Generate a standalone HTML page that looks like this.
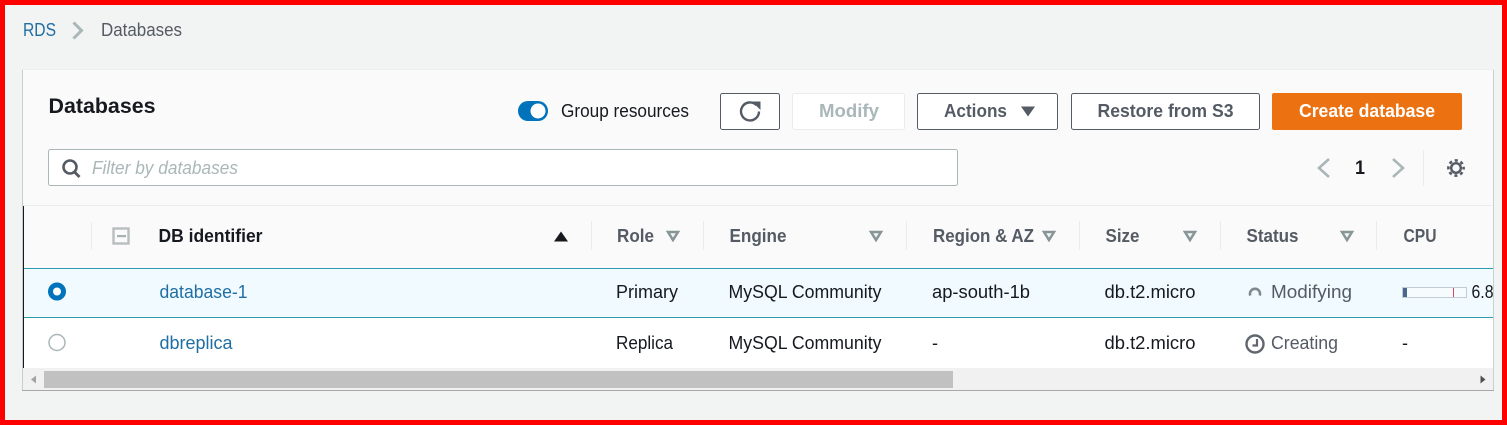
<!DOCTYPE html>
<html lang="en"><head><meta charset="utf-8"><title>Databases</title>
<style>
html,body{margin:0;padding:0;width:1507px;height:425px;overflow:hidden;background:#f2f3f3}
svg{display:block}
text{font-family:"Liberation Sans",sans-serif;font-size:18px;fill:#16191f}
.b{font-weight:700}
.g{fill:#545b64}
.l{fill:#1f6fa3}
</style></head><body>
<svg width="1507" height="425" viewBox="0 0 1507 425" xmlns="http://www.w3.org/2000/svg">
<rect width="1507" height="425" fill="#f2f3f3"/>

<!-- breadcrumb -->
<text x="23" y="36" class="l" textLength="33" lengthAdjust="spacingAndGlyphs">RDS</text>
<path d="M73.500 22.500l8 8-8 8" fill="none" stroke="#aab7b8" stroke-width="3"/>
<text x="101" y="36" class="g" textLength="81" lengthAdjust="spacingAndGlyphs">Databases</text>

<!-- panel -->
<rect x="22" y="69" width="1472" height="322" fill="#fafafa"/>
<rect x="22" y="69" width="1" height="322" fill="#c8cccc"/>
<rect x="1493" y="69" width="1" height="322" fill="#c5d3d8"/>
<rect x="22" y="69" width="1472" height="1" fill="#eeeeee"/>
<text x="48.500" y="113" class="b" style="font-size:21px" textLength="107" lengthAdjust="spacingAndGlyphs">Databases</text>

<!-- toggle -->
<rect x="518" y="101" width="30" height="20" rx="10" fill="#0073bb"/>
<circle cx="538" cy="111" r="7.500" fill="#fff"/>
<text x="561" y="117" textLength="128" lengthAdjust="spacingAndGlyphs">Group resources</text>

<!-- buttons -->
<rect x="720.500" y="93.500" width="59" height="36" rx="2" fill="#fff" stroke="#545b64"/>
<path d="M756.400 105.100A9 9 0 1 0 759 111.500" fill="none" stroke="#545b64" stroke-width="2.400"/>
<path d="M752 101.500h8.500v8.500z" fill="#545b64"/>

<rect x="792.500" y="93.500" width="112" height="36" rx="2" fill="#fff" stroke="#eaeded"/>
<text x="819" y="117" class="b" style="fill:#aab7b8" textLength="60" lengthAdjust="spacingAndGlyphs">Modify</text>

<rect x="917.500" y="93.500" width="140" height="36" rx="2" fill="#fff" stroke="#545b64"/>
<text x="944" y="117" class="b g" textLength="63" lengthAdjust="spacingAndGlyphs">Actions</text>
<path d="M1021 106.500h14l-7 10z" fill="#545b64"/>

<rect x="1071.500" y="93.500" width="188" height="36" rx="2" fill="#fff" stroke="#545b64"/>
<text x="1097.500" y="117" class="b g" textLength="136" lengthAdjust="spacingAndGlyphs">Restore from S3</text>

<rect x="1272" y="93" width="190" height="37" rx="2" fill="#ec7211"/>
<text x="1299" y="117" class="b" style="fill:#fff" textLength="136" lengthAdjust="spacingAndGlyphs">Create database</text>

<!-- filter -->
<rect x="48.500" y="149.500" width="909" height="36" rx="2" fill="#fff" stroke="#aab7b8"/>
<circle cx="70" cy="167" r="6.500" fill="none" stroke="#545b64" stroke-width="2.600"/>
<path d="M74.500 172l5 5" stroke="#545b64" stroke-width="2.800" fill="none"/>
<text x="92" y="174" style="fill:#aab7b8;font-style:italic" textLength="146" lengthAdjust="spacingAndGlyphs">Filter by databases</text>

<!-- pagination -->
<path d="M1329 159l-10 9 10 9" fill="none" stroke="#aab7b8" stroke-width="2.600"/>
<text x="1355" y="174" textLength="10" lengthAdjust="spacingAndGlyphs" style="font-size:19px;font-weight:700">1</text>
<path d="M1393 159l10 9-10 9" fill="none" stroke="#aab7b8" stroke-width="2.600"/>
<rect x="1423" y="150" width="1" height="36" fill="#eaeded"/>
<!-- gear -->
<circle cx="1456" cy="168" r="4.800" fill="none" stroke="#545b64" stroke-width="2.400"/>
<circle cx="1456" cy="168" r="7.600" fill="none" stroke="#545b64" stroke-width="2.600" stroke-dasharray="3.100 2.870" stroke-dashoffset="1.550"/>

<!-- table header -->
<rect x="23" y="205" width="1470" height="1" fill="#eaeded"/>
<rect x="23" y="206" width="1" height="162" fill="#16191f"/>
<g fill="#eaeded">
<rect x="91" y="222" width="1" height="28"/>
<rect x="591" y="221" width="1" height="29"/>
<rect x="703" y="221" width="1" height="29"/>
<rect x="906" y="221" width="1" height="29"/>
<rect x="1079" y="221" width="1" height="29"/>
<rect x="1220" y="221" width="1" height="29"/>
<rect x="1376" y="221" width="1" height="29"/>
</g>
<rect x="113.500" y="228.500" width="15" height="15" fill="#fafafa" stroke="#b8bebe" stroke-width="2.400"/>
<rect x="117" y="235" width="9" height="2.200" fill="#aab0b0"/>
<text x="158.500" y="242" class="b" textLength="104" lengthAdjust="spacingAndGlyphs">DB identifier</text>
<path d="M554 241.500l7-10 7 10z" fill="#16191f"/>

<text x="617" y="242" class="b g" textLength="37" lengthAdjust="spacingAndGlyphs">Role</text>
<path d="M668 232h10l-5 8z" fill="#f2f4f4" stroke="#879596" stroke-width="2.500"/>
<text x="729.500" y="242" class="b g" textLength="57" lengthAdjust="spacingAndGlyphs">Engine</text>
<path d="M871 232h10l-5 8z" fill="#f2f4f4" stroke="#879596" stroke-width="2.500"/>
<text x="933" y="242" class="b g" textLength="101" lengthAdjust="spacingAndGlyphs">Region &amp; AZ</text>
<path d="M1044 232h10l-5 8z" fill="#f2f4f4" stroke="#879596" stroke-width="2.500"/>
<text x="1105.500" y="242" class="b g" textLength="34" lengthAdjust="spacingAndGlyphs">Size</text>
<path d="M1185 232h10l-5 8z" fill="#f2f4f4" stroke="#879596" stroke-width="2.500"/>
<text x="1246.500" y="242" class="b g" textLength="52" lengthAdjust="spacingAndGlyphs">Status</text>
<path d="M1342 232h10l-5 8z" fill="#f2f4f4" stroke="#879596" stroke-width="2.500"/>
<text x="1403.500" y="242" class="b g" textLength="33" lengthAdjust="spacingAndGlyphs">CPU</text>

<!-- row 1 -->
<rect x="24" y="269" width="1469" height="48" fill="#f1faff"/>
<rect x="24" y="268" width="1469" height="1" fill="#2f9ab2"/>
<rect x="24" y="317" width="1469" height="1" fill="#2f9ab2"/>
<circle cx="57" cy="291.500" r="6.500" fill="#fff" stroke="#0073bb" stroke-width="5"/>
<text x="159.500" y="298" class="l" textLength="88" lengthAdjust="spacingAndGlyphs">database-1</text>
<text x="616" y="298" textLength="62" lengthAdjust="spacingAndGlyphs">Primary</text>
<text x="728.500" y="298" textLength="153" lengthAdjust="spacingAndGlyphs">MySQL Community</text>
<text x="932" y="298" textLength="98" lengthAdjust="spacingAndGlyphs">ap-south-1b</text>
<text x="1104.500" y="298" textLength="91" lengthAdjust="spacingAndGlyphs">db.t2.micro</text>
<path d="M1250.300 295.500a5 5 0 1 1 9.400 0" fill="none" stroke="#7f8a8c" stroke-width="2.600"/>
<text x="1271" y="298" class="g" textLength="81" lengthAdjust="spacingAndGlyphs">Modifying</text>
<rect x="1402.500" y="287.500" width="64" height="10" fill="#f6fbfd" stroke="#c3ccd2"/>
<rect x="1403" y="288" width="4" height="9" fill="#47688c"/>
<rect x="1453" y="288" width="1" height="9" fill="#d0485b"/>
<text x="1471.500" y="298" textLength="22" lengthAdjust="spacingAndGlyphs">6.8</text>

<!-- row 2 -->
<rect x="24" y="318" width="1469" height="50" fill="#fff"/>
<circle cx="57" cy="342.500" r="8" fill="#fff" stroke="#aab7b8" stroke-width="1.500"/>
<text x="159.500" y="349" class="l" textLength="73" lengthAdjust="spacingAndGlyphs">dbreplica</text>
<text x="616" y="349" textLength="57" lengthAdjust="spacingAndGlyphs">Replica</text>
<text x="728.500" y="349" textLength="153" lengthAdjust="spacingAndGlyphs">MySQL Community</text>
<text x="932" y="349" textLength="6" lengthAdjust="spacingAndGlyphs">-</text>
<text x="1104.500" y="349" textLength="91" lengthAdjust="spacingAndGlyphs">db.t2.micro</text>
<circle cx="1255" cy="344" r="8.500" fill="none" stroke="#5f666e" stroke-width="2.400"/>
<path d="M1257 339v6.500h-4.500" fill="none" stroke="#5f666e" stroke-width="2.200"/>
<text x="1271" y="349" class="g" textLength="67" lengthAdjust="spacingAndGlyphs">Creating</text>
<text x="1402" y="349" textLength="6" lengthAdjust="spacingAndGlyphs">-</text>

<!-- scrollbar -->
<rect x="23" y="368" width="1470" height="22" fill="#f1f1f1"/>
<rect x="44" y="371" width="909" height="17" fill="#c1c1c1"/>
<path d="M36 375.500v8l-5-4z" fill="#a3a3a3"/>
<path d="M1480.500 375.500v8l5-4z" fill="#505050"/>
<rect x="22" y="390" width="1472" height="1" fill="#a8a8a8"/>

<!-- red frame -->
<rect x="0" y="0" width="1507" height="5" fill="#f00"/>
<rect x="0" y="420" width="1507" height="5" fill="#f00"/>
<rect x="0" y="0" width="5" height="425" fill="#f00"/>
<rect x="1502" y="0" width="5" height="425" fill="#f00"/>
</svg>
</body></html>
